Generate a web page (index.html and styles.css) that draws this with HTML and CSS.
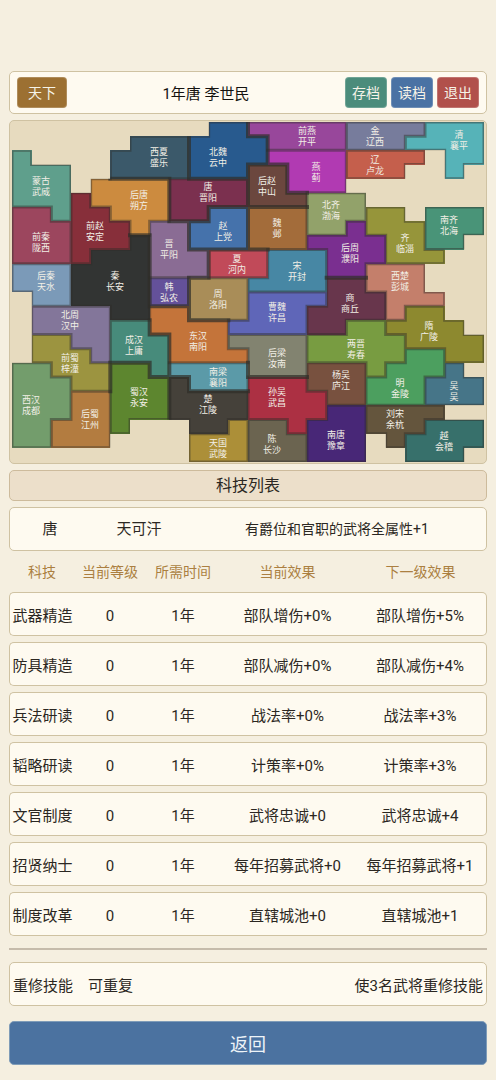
FILE: index.html
```html
<!DOCTYPE html>
<html lang="zh-CN">
<head>
    <meta charset="UTF-8">
    <meta name="viewport" content="width=device-width, initial-scale=1.0">
    <title>科技列表</title>

    <link rel="stylesheet" href="styles.css">
</head>
<body>

    <!-- Top Bar -->
    <header class="card top-bar">
        <button class="btn btn-world">天下</button>
        <h1>1年唐 李世民</h1>
        <div class="actions">
            <button class="btn btn-save">存档</button>
            <button class="btn btn-load">读档</button>
            <button class="btn btn-quit">退出</button>
        </div>
    </header>

    <!-- Map -->
    <section class="map-card">
        <svg id="map" class="map" viewBox="0 0 472 340"></svg>
    </section>

    <h2 class="title">科技列表</h2>

    <!-- Faction Trait -->
    <section class="card trait">
        <span>唐</span>
        <span>天可汗</span>
        <span class="trait-effect">有爵位和官职的武将全属性+1</span>
    </section>

    <!-- Tech Table -->
    <table class="tech">
        <colgroup>
            <col class="col-name">
            <col class="col-level">
            <col class="col-time">
            <col>
            <col>
        </colgroup>
        <thead>
            <tr><th>科技</th><th>当前等级</th><th>所需时间</th><th>当前效果</th><th>下一级效果</th></tr>
        </thead>
        <tbody>
            <tr><td>武器精造</td><td>0</td><td>1年</td><td>部队增伤+0%</td><td>部队增伤+5%</td></tr>
            <tr><td>防具精造</td><td>0</td><td>1年</td><td>部队减伤+0%</td><td>部队减伤+4%</td></tr>
            <tr><td>兵法研读</td><td>0</td><td>1年</td><td>战法率+0%</td><td>战法率+3%</td></tr>
            <tr><td>韬略研读</td><td>0</td><td>1年</td><td>计策率+0%</td><td>计策率+3%</td></tr>
            <tr><td>文官制度</td><td>0</td><td>1年</td><td>武将忠诚+0</td><td>武将忠诚+4</td></tr>
            <tr><td>招贤纳士</td><td>0</td><td>1年</td><td>每年招募武将+0</td><td>每年招募武将+1</td></tr>
            <tr><td>制度改革</td><td>0</td><td>1年</td><td>直辖城池+0</td><td>直辖城池+1</td></tr>
        </tbody>
    </table>

    <hr>

    <!-- Repeatable Tech -->
    <section class="card repeat">
        <span>重修技能</span>
        <span>可重复</span>
        <span class="repeat-effect">使3名武将重修技能</span>
    </section>

    <button class="btn-back">返回</button>

    <script src="map.js"></script>
</body>
</html>
```
FILE: styles.css
```css
/* Global Styles */
* {
    box-sizing: border-box;
}

body {
    margin: 0;
    padding: 71px 9px 15px;
    background-color: #f5efe0;
    color: #2b2722;
    font-family: Roboto, "Noto Sans CJK SC", sans-serif;
    font-size: 15px;
    line-height: 20px;
}

button {
    font-family: inherit;
    cursor: pointer;
}

.card {
    background-color: #fefaf0;
    border: 1px solid #cfc2a2;
    border-radius: 5px;
    height: 44px;
    margin-bottom: 6px;
}

/* Top Bar */
.top-bar {
    display: grid;
    grid-template-columns: 1fr auto 1fr;
    align-items: center;
    height: 43px;
    padding: 0 7px;
}

.top-bar h1 {
    margin: 0;
    padding: 2px 84px 0 0;
    font-size: 15px;
    font-weight: normal;
    color: #14120f;
}

.actions {
    display: flex;
    justify-content: flex-end;
    gap: 4px;
}

.btn {
    width: 42px;
    height: 31px;
    padding: 0;
    border: 1px solid rgba(255, 255, 255, 0.2);
    border-radius: 4px;
    color: #f6f3e8;
    font-size: 14px;
    line-height: 20px;
}

.btn-world {
    width: 50px;
    background-color: #9c7032;
}

.btn-save {
    background-color: #4b8c7b;
}

.btn-load {
    background-color: #4a72a4;
}

.btn-quit {
    background-color: #b1504b;
}

/* Map */
.map-card {
    padding: 1px 2px;
    margin-bottom: 6px;
    background-color: #e7dbbf;
    border: 1px solid #cfc2a2;
    border-radius: 5px;
}

.map {
    display: block;
    width: 100%;
}

.border {
    fill: none;
    stroke: #2f2d28;
    stroke-opacity: 0.45;
    stroke-width: 3;
    stroke-linecap: square;
}

.frontier {
    stroke-opacity: 0.7;
    stroke-width: 4;
}

.label {
    fill: #f2efe6;
    font-size: 9px;
    text-anchor: middle;
}

/* Title and Trait */
.title {
    display: flex;
    align-items: center;
    justify-content: center;
    height: 31px;
    margin: 0 0 6px;
    background-color: #ecdfca;
    border: 1px solid #cdbb9c;
    border-radius: 5px;
    font-size: 16px;
    font-weight: normal;
}

.trait {
    display: grid;
    grid-template-columns: 80px 98px 1fr;
    align-items: center;
    text-align: center;
    margin-bottom: 0;
}

.trait-effect {
    font-size: 14px;
}

/* Tech Table */
.tech {
    width: 100%;
    table-layout: fixed;
    border-collapse: separate;
    border-spacing: 0 6px;
    text-align: center;
}

.col-name {
    width: 66px;
}

.col-level {
    width: 70px;
}

.col-time {
    width: 76px;
}

.tech th {
    height: 29px;
    padding: 0;
    color: #ab7f41;
    font-size: 14px;
    font-weight: normal;
}

.tech td {
    height: 44px;
    padding: 3px 0 0;
    background-color: #fefaf0;
    border: solid #cfc2a2;
    border-width: 1px 0;
    white-space: nowrap;
}

.tech td:first-child {
    border-left-width: 1px;
    border-radius: 5px 0 0 5px;
}

.tech td:last-child {
    border-right-width: 1px;
    border-radius: 0 5px 5px 0;
}

hr {
    height: 2px;
    margin: 6px 0 12px;
    border: none;
    background-color: #c5bbab;
}

/* Repeatable Tech */
.repeat {
    display: flex;
    align-items: center;
    gap: 15px;
    padding: 3px 3px 0;
    margin-bottom: 15px;
}

.repeat-effect {
    margin-left: auto;
}

.btn-back {
    display: block;
    width: 100%;
    height: 44px;
    padding: 0;
    background-color: #4b72a0;
    border: 1px solid #7f9cb8;
    border-radius: 5px;
    color: #eef4f8;
    font-size: 18px;
}
```
FILE: map.js
```js
// one letter per cell, "." is empty land
const grid = [
    "..........HHIIIIILLLLMMM",
    "......FFFHHHHIIIILLLMMMM",
    "A....FFFFHHHHJJJJNNNN.MM",
    "AAA..FFFFHHHKKJJJNNN..M.",
    "AAA.EEEEGGGGKKJJJ.......",
    "AAADEEEEGGGGKKKOOO......",
    "BBADDEEEGGUUVVVOOOQQ.RRR",
    "BBBDDDETTUUUVVVOOPQQQRRR",
    "BBBDDDSTTUUUVVVPPPPQQRR.",
    "BBBDSSSTTTWWWXXXPPPQQQ..",
    "CCCSSSSTTTWWWXXXPPccc...",
    "CCCSSSSZZYYYXXXXbbccc...",
    ".CCSSSSZZYYYaaaabbbccc..",
    ".ooooSSmmYYYaaabbbbcdd..",
    ".oooonnmmmmaaaabbeedddd.",
    ".ppoonnnmmmlllleeeeedddd",
    ".ppponnnmmmmllleeeeeffdd",
    "qqpppssnttttlllhhhefffg.",
    "qqqppsssutttiiihhhfffggg",
    "qqqrrsssuuuuiiiihhfffggg",
    "qqqrrsssuuuuiiiijjwwww..",
    "qqrrrs...uuvkkijjjwwwxxx",
    "qqrrr....vvvkkkjjj.wxxxx",
    ".........vvvkkkjjj..xxx."
];

// letter: [faction, city, color, label x, label y]
const regions = {
    A: ["蒙古", "武威", "#5f9f8c", 29, 64],
    B: ["前秦", "陇西", "#9c465e", 29, 120],
    C: ["后秦", "天水", "#7b9ab8", 34, 159],
    D: ["前赵", "安定", "#872f3a", 83, 109],
    E: ["后唐", "朔方", "#cc8b3f", 127, 78],
    F: ["西夏", "盛乐", "#3b596a", 147, 35],
    G: ["唐", "晋阳", "#7b304f", 196, 70],
    H: ["北魏", "云中", "#285a8e", 206, 35],
    I: ["前燕", "开平", "#98479b", 295, 14],
    J: ["燕", "蓟", "#b13ab2", 304, 50],
    K: ["后赵", "中山", "#6b473e", 255, 64],
    L: ["金", "辽西", "#777c9c", 363, 14],
    M: ["清", "襄平", "#56b3b8", 447, 18],
    N: ["辽", "卢龙", "#c55f4c", 363, 43],
    O: ["北齐", "渤海", "#92a26a", 319, 88],
    P: ["后周", "濮阳", "#7a2f90", 338, 131],
    Q: ["齐", "临淄", "#96953a", 393, 121],
    R: ["南齐", "北海", "#499478", 437, 103],
    S: ["秦", "长安", "#323433", 103, 159],
    T: ["晋", "平阳", "#8a6c94", 157, 127],
    U: ["赵", "上党", "#4572ab", 211, 109],
    V: ["魏", "邺", "#a36c3a", 265, 106],
    W: ["夏", "河内", "#c14a59", 225, 142],
    X: ["宋", "开封", "#4787a4", 285, 149],
    Y: ["周", "洛阳", "#a98d58", 206, 177],
    Z: ["韩", "弘农", "#64519a", 157, 170],
    a: ["曹魏", "许昌", "#5f66b8", 265, 190],
    b: ["商", "商丘", "#68364c", 338, 181],
    c: ["西楚", "彭城", "#c47f6b", 388, 159],
    d: ["隋", "广陵", "#8d892f", 417, 209],
    e: ["两晋", "寿春", "#789c41", 344, 227],
    f: ["明", "金陵", "#4c9f5f", 388, 266],
    g: ["吴", "吴", "#467588", 442, 269],
    h: ["杨吴", "庐江", "#78513f", 329, 258],
    i: ["孙吴", "武昌", "#ac3043", 265, 275],
    j: ["南唐", "豫章", "#482777", 324, 318],
    k: ["陈", "长沙", "#6b6450", 260, 322],
    l: ["后梁", "汝南", "#828370", 265, 236],
    m: ["东汉", "南阳", "#c4743a", 186, 219],
    n: ["成汉", "上庸", "#478b7b", 122, 223],
    o: ["北周", "汉中", "#83769a", 58, 198],
    p: ["前蜀", "梓潼", "#9c9440", 58, 241],
    q: ["西汉", "成都", "#739d6c", 19, 283],
    r: ["后蜀", "江州", "#b37c40", 78, 297],
    s: ["蜀汉", "永安", "#5d862f", 127, 275],
    t: ["南梁", "襄阳", "#5b9aa8", 206, 255],
    u: ["楚", "江陵", "#45413a", 196, 282],
    v: ["天国", "武陵", "#ac8f38", 206, 326],
    w: ["刘宋", "余杭", "#64553d", 383, 297],
    x: ["越", "会稽", "#37706b", 432, 319]
};

// neighbours with a heavy line between them
const frontiers = ("FH EF EG GH HI HJ HK JK GK GU TU UV KV GT ST SZ ES mn TW UW VW YZ Ym Zm TY " +
    "ns ps nu nt tu lt il su bP").split(" ");

const svg = document.getElementById("map");
const NS = "http://www.w3.org/2000/svg";
const cellW = 472 / 24;
const cellH = 340 / 24;

function add(parent, tag, attrs, text) {
    const el = document.createElementNS(NS, tag);
    for (const key in attrs) el.setAttribute(key, attrs[key]);
    if (text) el.textContent = text;
    parent.appendChild(el);
    return el;
}

function at(row, col) {
    return (grid[row] && grid[row][col]) || ".";
}

const fills = {};
let land = "";
let thin = "";
let thick = "";

function addEdge(a, b, line) {
    if (a === b) return;
    if (frontiers.includes(a + b) || frontiers.includes(b + a)) thick += line;
    else thin += line;
}

for (let r = 0; r <= 24; r++) {
    for (let c = 0; c <= 24; c++) {
        const id = at(r, c);
        const x = c * cellW;
        const y = r * cellH;
        if (id !== ".") {
            const cell = `M${x} ${y}h${cellW}v${cellH}h${-cellW}z`;
            fills[id] = (fills[id] || "") + cell;
            land += cell;
        }
        addEdge(at(r, c - 1), id, `M${x} ${y}v${cellH}`);
        addEdge(at(r - 1, c), id, `M${x} ${y}h${cellW}`);
    }
}

const clip = add(svg, "clipPath", { id: "land" });
add(clip, "path", { d: land });

for (const id in fills) {
    add(svg, "path", { d: fills[id], fill: regions[id][2], "shape-rendering": "crispEdges" });
}

const lines = add(svg, "g", { "clip-path": "url(#land)" });
add(lines, "path", { d: thin, class: "border" });
add(lines, "path", { d: thick, class: "border frontier" });

for (const id in regions) {
    const [faction, city, , x, y] = regions[id];
    add(svg, "text", { x: x, y: y - 2, class: "label" }, faction);
    add(svg, "text", { x: x, y: y + 9, class: "label" }, city);
}
```
